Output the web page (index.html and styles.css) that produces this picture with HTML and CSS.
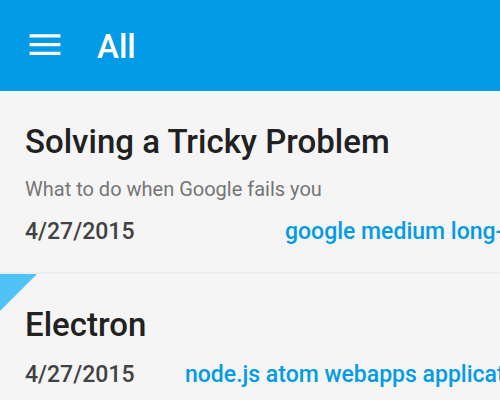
FILE: index.html
```html
<!DOCTYPE html>
<html lang="en">
<head>
<meta charset="utf-8">
<title>All</title>
<link rel="stylesheet" href="styles.css">
</head>
<body>
<header class="toolbar">
  <button class="menu" type="button" aria-label="Menu">
    <svg width="32" height="24" viewBox="0 0 32 24" aria-hidden="true"><path d="M.6 1.9h30.8M.6 10.6h30.8M.6 19.4h30.8" stroke="#fff" stroke-width="3.2"/></svg>
  </button>
  <h1 class="toolbar-title">All</h1>
</header>
<main class="list">
  <article class="item">
    <h2 class="title">Solving a Tricky Problem</h2>
    <p class="summary">What to do when Google fails you</p>
    <div class="meta">
      <time class="date" datetime="2015-04-27">4/27/2015</time>
      <div class="tags tags-short"><a href="#">google</a> <a href="#">medium</a> <a href="#">long-form</a></div>
    </div>
  </article>
  <article class="item item-marked">
    <h2 class="title">Electron</h2>
    <div class="meta">
      <time class="date" datetime="2015-04-27">4/27/2015</time>
      <div class="tags"><a href="#">node.js</a> <a href="#">atom</a> <a href="#">webapps</a> <a href="#">applications</a></div>
    </div>
  </article>
</main>
</body>
</html>
```
FILE: styles.css
```css
* { box-sizing: border-box; }
body {
  margin: 0;
  background: #f5f5f5;
  color: #212121;
  font-family: Roboto, sans-serif;
}
h1, h2, p { margin: 0; font-weight: 500; }
.toolbar {
  display: flex;
  align-items: center;
  gap: 36px;
  height: 91px;
  padding: 0 29px;
  background: #039be5;
  color: #fff;
}
.menu {
  display: flex;
  padding: 0;
  border: 0;
  background: none;
}
.toolbar-title { padding-top: 2px; font-size: 33px; line-height: 40px; }
.item {
  position: relative;
  padding: 30px 0 26px 25px;
  border-bottom: 2px solid #eeeeee;
}
.item-marked::before {
  content: "";
  position: absolute;
  top: 0;
  left: 0;
  width: 37px;
  height: 37px;
  background: #4fc3f7;
  clip-path: polygon(0 0, 100% 0, 0 100%);
}
.title { font-size: 33px; line-height: 42px; }
.summary {
  margin: 14px 0 0;
  padding-bottom: 2px;
  color: #757575;
  font-size: 20px;
  font-weight: 400;
  line-height: 24px;
}
.meta {
  display: flex;
  margin-top: 15px;
  font-size: 23px;
  font-weight: 500;
  line-height: 28px;
  white-space: nowrap;
}
.date { flex: none; width: 160px; color: #424242; }
.tags { flex: 1; min-width: 0; overflow: hidden; }
.tags a { color: #039be5; text-decoration: none; }
.tags-short { padding-left: 100px; }
```
